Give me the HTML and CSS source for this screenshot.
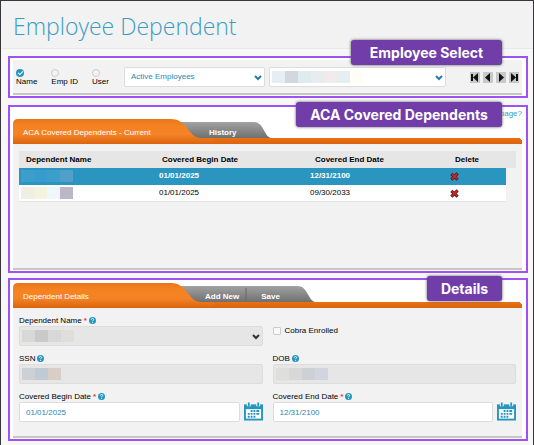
FILE: index.html
```html
<!DOCTYPE html>
<html lang="en">
<head>
<meta charset="utf-8">
<title>Employee Dependent</title>
<link rel="stylesheet" href="styles.css">
</head>
<body>
<svg class="defs" aria-hidden="true">
  <defs>
    <linearGradient id="orange" x1="0" y1="0" x2="0" y2="1">
      <stop offset="0" stop-color="#e8751a"/><stop offset=".25" stop-color="#f58220"/><stop offset=".6" stop-color="#f58428"/><stop offset="1" stop-color="#dc640c"/>
    </linearGradient>
    <linearGradient id="gray" x1="0" y1="0" x2="0" y2="1">
      <stop offset="0" stop-color="#a2a2a2"/><stop offset="1" stop-color="#707070"/>
    </linearGradient>
    <symbol id="chevron" viewBox="0 0 8 6"><path d="M1 1l3 3 3-3" fill="none" stroke="currentColor" stroke-width="2"/></symbol>
    <symbol id="help" viewBox="0 0 14 14"><circle cx="7" cy="7" r="7" fill="#2596be"/><path d="M4.7 5.3C4.8 3.6 5.8 3 7 3c1.400 0 2.400.8 2.400 2 0 1.600-2.300 1.700-2.300 3.400M7.100 9.700v2" fill="none" stroke="#fff" stroke-width="1.800"/></symbol>
    <symbol id="cross" viewBox="0 0 10 10"><path d="M1.500 2l7 6.500M8.500 1.500l-7 7" fill="none" stroke="#4c1b1b" stroke-width="3.400"/><path d="M2 2.200l6 5.600M8 2L2 8" fill="none" stroke="#d9252b" stroke-width="1.800"/></symbol>
    <symbol id="calendar" viewBox="0 0 20 19">
      <path d="M0 2h20v17H0z" fill="#2596be"/><path d="M2 7h16v10H2z" fill="#fff"/>
      <path d="M3 1h4v3H3zM13 1h4v3h-4z" fill="#fff"/><path d="M4 0h2v4H4zM14 0h2v4h-2z" fill="#2596be"/>
      <path d="M7 8h2v2H7zM10 8h2v2h-2zM13 8h3v2h-3zM4 11h2v2H4zM7 11h2v2H7zM10 11h2v2h-2zM13 11h3v2h-3zM4 14h2v2H4zM7 14h2v2H7zM10 14h2v2h-2z" fill="#2596be"/>
    </symbol>
  </defs>
</svg>
<div class="page">
  <header class="page-header"><h1>Employee Dependent</h1></header>
  <main>
    <section class="frame">
      <h2 class="badge badge-select">Employee Select</h2>
      <div class="panel toolbar">
        <div class="radios">
          <label><input type="radio" name="by" checked>Name</label>
          <label><input type="radio" name="by">Emp ID</label>
          <label><input type="radio" name="by">User</label>
        </div>
        <div class="picker picker-status">
          <select aria-label="Employee status"><option>Active Employees</option></select>
          <svg class="chevron"><use href="#chevron"/></svg>
        </div>
        <div class="picker picker-employee">
          <select aria-label="Employee"><option></option></select>
          <span class="mask"><i class="m1"></i><i class="m2"></i><i class="m3"></i><i class="m4"></i><i class="m5"></i><i class="m1"></i><i class="m6"></i></span>
          <svg class="chevron"><use href="#chevron"/></svg>
        </div>
        <div class="nav">
          <button type="button" aria-label="First"><svg viewBox="0 0 10 11"><path d="M1 2h2v7H1zM8 1v9L3 5.500z"/></svg></button>
          <button type="button" aria-label="Previous"><svg viewBox="0 0 10 11"><path d="M7 1v9L2 5.500z"/></svg></button>
          <button type="button" aria-label="Next"><svg viewBox="0 0 10 11"><path d="M3 1v9l5-4.500z"/></svg></button>
          <button type="button" aria-label="Last"><svg viewBox="0 0 10 11"><path d="M7 2h2v7H7zM2 1v9l5-4.500z"/></svg></button>
        </div>
      </div>
    </section>

    <section class="frame">
      <h2 class="badge badge-covered">ACA Covered Dependents</h2>
      <a class="page-link" href="#">page?</a>
      <div class="tabs">
        <svg class="tab-shape" viewBox="0 0 310 25" aria-hidden="true">
          <path d="M150 3h90c7 0 9 5 12 10 2 4 4 6 8 6H150z" fill="url(#gray)"/>
          <path d="M0 25V5q0-5 5-5h153c8 0 12 4 16 9 5 6 7 10 15 10h12v6z" fill="url(#orange)"/>
        </svg>
        <button type="button" class="tab-main">ACA Covered Dependents - Current</button>
        <button type="button" class="tab-side">History</button>
      </div>
      <div class="panel list">
        <table>
          <colgroup><col class="c-name"><col class="c-begin"><col class="c-end"><col><col class="c-gutter"></colgroup>
          <thead><tr><th>Dependent Name</th><th>Covered Begin Date</th><th>Covered End Date</th><th>Delete</th><td></td></tr></thead>
          <tbody>
            <tr class="selected"><td><span class="mask"><i class="b1"></i><i class="b2"></i><i class="b1"></i><i class="b3"></i></span></td><td>01/01/2025</td><td>12/31/2100</td><td><button type="button" class="delete" aria-label="Delete"><svg><use href="#cross"/></svg></button></td></tr>
            <tr><td><span class="mask"><i class="p1"></i><i class="p2"></i><i class="p3"></i><i class="p4"></i></span></td><td>01/01/2025</td><td>09/30/2033</td><td><button type="button" class="delete" aria-label="Delete"><svg><use href="#cross"/></svg></button></td></tr>
          </tbody>
        </table>
      </div>
    </section>

    <section class="frame frame-details">
      <h2 class="badge badge-details">Details</h2>
      <div class="tabs">
        <svg class="tab-shape" viewBox="0 0 310 25" aria-hidden="true">
          <path d="M150 3h134c7 0 9 5 12 10 2 4 4 6 8 6H150z" fill="url(#gray)"/>
          <path d="M233 5v12" stroke="#666"/>
          <path d="M0 25V5q0-5 5-5h153c8 0 12 4 16 9 5 6 7 10 15 10h12v6z" fill="url(#orange)"/>
        </svg>
        <button type="button" class="tab-main">Dependent Details</button>
        <button type="button" class="tab-side">Add New</button>
        <button type="button" class="tab-side">Save</button>
      </div>
      <form class="panel form">
        <div class="field">
          <label for="dep">Dependent Name <b>*</b> <svg class="help"><use href="#help"/></svg></label>
          <div class="picker muted">
            <select id="dep"><option></option></select>
            <span class="mask"><i class="g1"></i><i class="g2"></i><i class="g3"></i><i class="g4"></i></span>
            <svg class="chevron"><use href="#chevron"/></svg>
          </div>
        </div>
        <label class="check"><input type="checkbox">Cobra Enrolled</label>
        <div class="field">
          <label for="ssn">SSN <svg class="help"><use href="#help"/></svg></label>
          <div class="picker muted"><input id="ssn" type="text" readonly><span class="mask"><i class="g5"></i><i class="g6"></i><i class="g7"></i></span></div>
        </div>
        <div class="field">
          <label for="dob">DOB <svg class="help"><use href="#help"/></svg></label>
          <div class="picker muted"><input id="dob" type="text" readonly><span class="mask"><i class="g4"></i><i class="g1"></i><i class="g5"></i><i class="g8"></i></span></div>
        </div>
        <div class="field">
          <label for="begin">Covered Begin Date <b>*</b> <svg class="help"><use href="#help"/></svg></label>
          <div class="date"><input id="begin" type="text" value="01/01/2025"><button type="button" aria-label="Choose begin date"><svg><use href="#calendar"/></svg></button></div>
        </div>
        <div class="field">
          <label for="end">Covered End Date <b>*</b> <svg class="help"><use href="#help"/></svg></label>
          <div class="date"><input id="end" type="text" value="12/31/2100"><button type="button" aria-label="Choose end date"><svg><use href="#calendar"/></svg></button></div>
        </div>
      </form>
    </section>
  </main>
</div>
</body>
</html>
```

FILE: styles.css
```css
* { box-sizing: border-box; }
body { margin: 0; font: 8px/10px "Liberation Sans", Arial, sans-serif; color: #000; background: #fff; }
button, input, select { font: inherit; margin: 0; border-radius: 0; }
button { padding: 0; border: 0; background: none; color: inherit; }
svg { display: block; }
.defs { position: absolute; width: 0; height: 0; }
.page { min-height: 100vh; border: 1px solid #38363a; background: #f7f7f7; }
.page-header { height: 48px; padding: 5px 12px 0; background: #f2f2f2; border-bottom: 1px solid #e8e8e8; }
h1 { margin: 0; font: 300 23px/40px "Open Sans", sans-serif; color: #3a9cc2; }
main { display: grid; gap: 7px; padding: 7px 5px 4px 7px; }

.frame { position: relative; padding: 2px 4px 1px 3px; border: 2px solid #9d52f2; background: #fff; }
.frame-details { padding-top: 3px; margin-top: -2px; }
.panel { background: #f2f2f2; border-bottom: 2px solid #c6c6c6; }
.badge { position: absolute; z-index: 2; right: 24px; margin: 0; height: 25px; border-radius: 3px; background: #713da9; color: #fff; box-shadow: 0 0 3px #555; font: 700 14px/25px Inter, sans-serif; text-align: center; white-space: nowrap; }
.badge-select { top: -18px; width: 151px; }
.badge-covered { top: -5px; width: 206px; }
.badge-details { top: -4px; width: 75px; }

.toolbar { display: flex; align-items: center; height: 35px; padding: 1px 3px 0 0; }
.radios { display: flex; gap: 14px; width: 111px; padding: 1px 0 0 3px; flex: none; }
.radios label { white-space: nowrap; line-height: 9px; }
.radios input { appearance: none; display: block; width: 8px; height: 8px; border: 1px solid #ccc; border-radius: 50%; background: #f2f2f2; }
.radios input:checked { border: 0; background: #2596be; position: relative; }
.radios input:checked::after { content: ""; position: absolute; left: 2px; top: 2px; width: 4px; height: 2px; border: solid #fff; border-width: 0 0 1px 1px; transform: rotate(-45deg); }

.picker { position: relative; height: 20px; }
.picker select, .picker input, .date input { appearance: none; width: 100%; height: 20px; padding: 0 6px; border: 1px solid #ddd; border-radius: 2px; outline: 0; background: #fff; color: #2d87b0; }
.picker .chevron { position: absolute; right: 3px; top: 8px; width: 8px; height: 6px; color: #277da8; pointer-events: none; }
.picker .mask { position: absolute; left: 3px; top: 4px; pointer-events: none; }
.picker.muted select, .picker.muted input { background: #e6e6e6; }
.picker.muted .chevron { color: #333; }
.picker-status { flex: 141; }
.picker-employee { flex: 178; margin-left: 4px; }
.nav { display: flex; gap: 3px; margin-left: 24px; }
.nav button { width: 10px; height: 11px; background: #c8c8c8; }
.nav svg { width: 10px; height: 11px; fill: #111; }

.mask { display: flex; }
.mask i { width: 13px; height: 12px; }
.m1 { background: #e4eef3; } .m2 { background: #d1d8e0; } .m3 { background: #deebef; } .m4 { background: #e6edef; }
.m5 { background: #f2eaeb; } .m6 { background: #fffef6; }
.b1 { background: #3d9dcb; } .b2 { background: #369cce; } .b3 { background: #519fc8; }
.p1 { background: #f1eee5; } .p2 { background: #f3f3de; } .p3 { background: #eff7fa; } .p4 { background: #bdb6c6; }
.g1 { background: #d8d8d6; } .g2 { background: #c9c9c9; } .g3 { background: #d8d8d8; } .g4 { background: #dededb; }
.g5 { background: #cdd1d5; } .g6 { background: #c1cad3; } .g7 { background: #d8cec8; } .g8 { background: #d2d5df; }

.page-link { display: block; height: 10px; text-align: right; color: #3a9cc2; text-decoration: none; }
.tabs { position: relative; display: flex; height: 25px; background: linear-gradient(#e87015, #dc640c) 0 19px / 100% 6px no-repeat; color: #fff; }
.tabs::after { content: ""; position: absolute; right: 0; top: 19px; width: 4px; height: 4px; background: radial-gradient(circle at 0 100%, transparent 4px, #fff 4px); }
.tab-shape { position: absolute; left: 0; top: 0; width: 310px; height: 25px; }
.tab-main { position: relative; width: 192px; padding: 2px 0 0 10px; text-align: left; }
.tab-side { position: relative; padding-top: 2px; margin-right: 22px; font-weight: 700; }
.page-link + .tabs .tab-side { margin-left: 4px; }

.list { height: 126px; padding: 7px 6px 0; }
table { width: 100%; border-collapse: collapse; table-layout: fixed; text-align: left; }
th, td { height: 17px; padding: 0 0 0 2px; }
tbody td { padding-top: 1px; }
thead { background: #e6e6e6; }
thead th { padding-left: 7px; }
thead th:nth-child(2) { padding-left: 5px; }
tbody td { background: #fff; border-bottom: 1px solid #e4e4e4; }
.selected td { height: 16px; background: #2a96bf; color: #fff; border-color: #2a96bf; font-weight: 700; }
.c-name { width: 138px; } .c-begin { width: 151px; } .c-end { width: 140px; } .c-gutter { width: 10px; }
.delete, .delete svg { display: block; width: 9px; height: 9px; }

.form { display: grid; grid-template-columns: 1fr 1fr; gap: 7px 10px; padding: 7px 6px 14px; }
.field > label { display: flex; align-items: center; gap: 2px; height: 11px; }
.field b { color: #e33; }
.help { width: 7px; height: 7px; }
.check { display: flex; align-items: center; gap: 4px; padding-top: 1px; }
.check input { appearance: none; width: 8px; height: 8px; border: 1px solid #ccc; border-radius: 1px; background: #f8f8f8; }
.date { display: flex; gap: 4px; }
.date input { flex: 1; min-width: 0; }
.date button, .date svg { width: 19px; height: 19px; }
```
